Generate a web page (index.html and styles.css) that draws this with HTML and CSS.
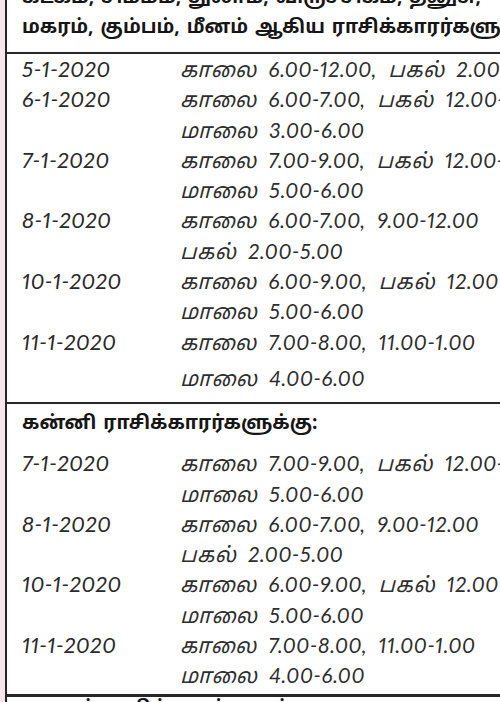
FILE: index.html
```html
<!DOCTYPE html>
<html lang="ta">
<head>
<meta charset="utf-8">
<link rel="stylesheet" href="styles.css">
</head>
<body>
<div class="page">
  <div class="margin-strip"></div>
  <div class="sheet">
    <section class="block block-first">
      <h2 class="heading heading-top">
        <span class="heading-line">கடகம், சிம்மம், துலாம், விருச்சிகம், தனுசு,</span>
        <span class="heading-line">மகரம், கும்பம், மீனம் ஆகிய ராசிக்காரர்களுக்கு:</span>
      </h2>
      <div class="rows">
        <div class="row"><div class="date">5-1-2020</div><div class="times"><div class="line">காலை 6.00-12.00, பகல் 2.00-5.00</div></div></div>
        <div class="row"><div class="date">6-1-2020</div><div class="times"><div class="line">காலை 6.00-7.00, பகல் 12.00-1.00</div><div class="line">மாலை 3.00-6.00</div></div></div>
        <div class="row"><div class="date">7-1-2020</div><div class="times"><div class="line">காலை 7.00-9.00, பகல் 12.00-1.00</div><div class="line">மாலை 5.00-6.00</div></div></div>
        <div class="row"><div class="date">8-1-2020</div><div class="times"><div class="line">காலை 6.00-7.00, 9.00-12.00</div><div class="line">பகல் 2.00-5.00</div></div></div>
        <div class="row"><div class="date">10-1-2020</div><div class="times"><div class="line">காலை 6.00-9.00, பகல் 12.00-1.00</div><div class="line">மாலை 5.00-6.00</div></div></div>
        <div class="row row-loose"><div class="date">11-1-2020</div><div class="times"><div class="line">காலை 7.00-8.00, 11.00-1.00</div><div class="line">மாலை 4.00-6.00</div></div></div>
      </div>
    </section>
    <section class="block block-second">
      <h2 class="heading heading-kanni">கன்னி ராசிக்காரர்களுக்கு:</h2>
      <div class="rows">
        <div class="row"><div class="date">7-1-2020</div><div class="times"><div class="line">காலை 7.00-9.00, பகல் 12.00-1.00</div><div class="line">மாலை 5.00-6.00</div></div></div>
        <div class="row"><div class="date">8-1-2020</div><div class="times"><div class="line">காலை 6.00-7.00, 9.00-12.00</div><div class="line">பகல் 2.00-5.00</div></div></div>
        <div class="row"><div class="date">10-1-2020</div><div class="times"><div class="line">காலை 6.00-9.00, பகல் 12.00-1.00</div><div class="line">மாலை 5.00-6.00</div></div></div>
        <div class="row"><div class="date">11-1-2020</div><div class="times"><div class="line">காலை 7.00-8.00, 11.00-1.00</div><div class="line">மாலை 4.00-6.00</div></div></div>
      </div>
    </section>
    <section class="block block-third">
      <h2 class="heading heading-next">துலாம் ராசிக்காரர்களுக்கு:</h2>
    </section>
  </div>
</div>
</body>
</html>
```

FILE: styles.css
```css
html, body {
  margin: 0;
  padding: 0;
  background: #ffffff;
  overflow: hidden;
}

.page {
  display: flex;
  width: 500px;
  height: 702px;
  overflow: hidden;
  color: #1e1e1e;
}

.margin-strip {
  flex: 0 0 5px;
  background: #f6e6ec;
}

.sheet {
  flex: 1 1 auto;
  border-left: 2px solid #262626;
  min-width: 0;
  overflow: hidden;
}

.block {
  padding-left: 15px;
}

.block-first {
  border-bottom: 2px solid #262626;
  padding-bottom: 9px;
}

.block-second {
  border-bottom: 3px solid #262626;
  padding-bottom: 3px;
}

.heading {
  margin: 0;
  font-family: "Noto Sans Tamil", "Noto Sans", "Lato", sans-serif;
  font-weight: 700;
  font-size: 19px;
  line-height: 30px;
  letter-spacing: 0;
  word-spacing: 2px;
  white-space: nowrap;
  color: #161616;
}

.heading-top {
  display: flex;
  flex-direction: column;
  margin-top: -17px;
  padding-bottom: 9px;
  border-bottom: 2px solid #262626;
  margin-left: -15px;
  padding-left: 15px;
}

.heading-kanni {
  padding-top: 5px;
  margin-bottom: 9px;
}

.heading-next {
  padding-top: 1px;
  line-height: 22px;
}

.rows {
  display: flex;
  flex-direction: column;
}

.row {
  display: grid;
  grid-template-columns: 158px auto;
  font-size: 21px;
  line-height: 30.3px;
  white-space: nowrap;
  font-variant-numeric: proportional-nums;
}

.row-loose .line + .line {
  margin-top: 6px;
}

.date {
  font-family: "Lato", "DejaVu Sans", sans-serif;
  font-style: italic;
  font-size: 22px;
  letter-spacing: 0.5px;
  color: #2a2a2a;
}

.times {
  font-family: "Lato", "Noto Sans Tamil", sans-serif;
  font-style: italic;
  letter-spacing: 0.6px;
  word-spacing: 6px;
  color: #2e2e2e;
}
```
